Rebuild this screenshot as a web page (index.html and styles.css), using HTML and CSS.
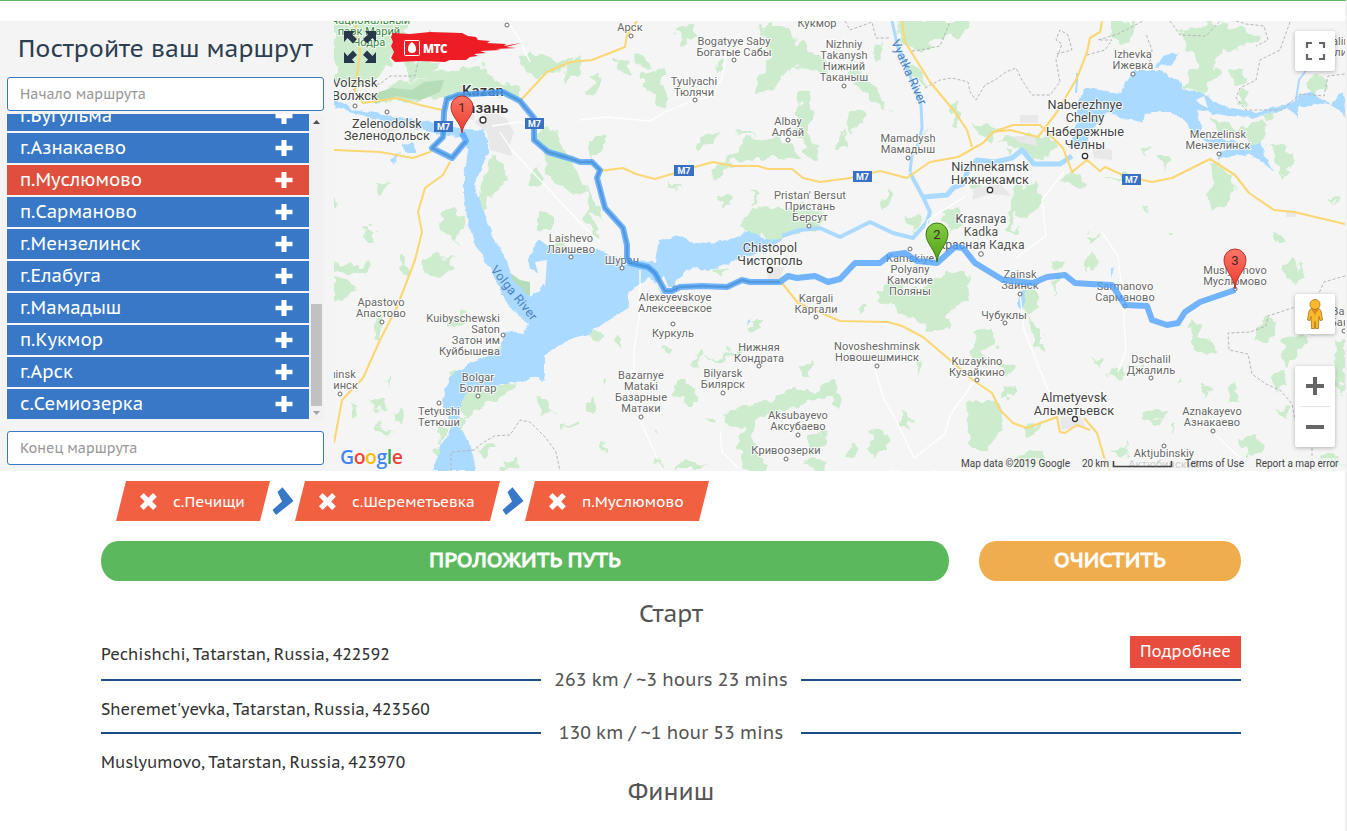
FILE: index.html
```html
<!DOCTYPE html>
<html lang="ru">
<head>
<meta charset="utf-8">
<title>Постройте ваш маршрут</title>
<link rel="stylesheet" href="styles.css">
</head>
<body>
<svg class="defs" width="0" height="0" aria-hidden="true">
  <symbol id="plus" viewBox="0 0 18 18"><path d="M6.500 1h5v5.700H17.500v4.600H11.500V17h-5v-5.700H.5V6.700h6z" fill="#fff"/></symbol>
  <symbol id="cross" viewBox="0 0 18 18"><path d="M4.500 1 9 5.400 13.500 1 17 4.500 12.600 9 17 13.500 13.500 17 9 12.600 4.500 17 1 13.500 5.400 9 1 4.500z" fill="#fff"/></symbol>
  <symbol id="chev" viewBox="0 0 22 30"><path d="M5.500 6 10.500 1.300 21.500 15 4 29 .5 24 10 15.500z" fill="#3878c7"/></symbol>
</svg>
<div class="page">
  <div class="planner">
    <aside class="panel">
      <h1 class="panel-title">Постройте ваш маршрут</h1>
      <input class="field" placeholder="Начало маршрута">
      <div class="list">
        <div class="items">
          <div class="item"><span>г.Бугульма</span><svg><use href="#plus"/></svg></div>
          <div class="item"><span>г.Азнакаево</span><svg><use href="#plus"/></svg></div>
          <div class="item active"><span>п.Муслюмово</span><svg><use href="#plus"/></svg></div>
          <div class="item"><span>п.Сарманово</span><svg><use href="#plus"/></svg></div>
          <div class="item"><span>г.Мензелинск</span><svg><use href="#plus"/></svg></div>
          <div class="item"><span>г.Елабуга</span><svg><use href="#plus"/></svg></div>
          <div class="item"><span>г.Мамадыш</span><svg><use href="#plus"/></svg></div>
          <div class="item"><span>п.Кукмор</span><svg><use href="#plus"/></svg></div>
          <div class="item"><span>г.Арск</span><svg><use href="#plus"/></svg></div>
          <div class="item"><span>с.Семиозерка</span><svg><use href="#plus"/></svg></div>
        </div>
        <svg class="scroll" viewBox="0 0 15 307"><path d="M0 0h15v307H0z" fill="#f1f1f1"/><path d="M2 190h11v102H2z" fill="#c1c1c1"/><path d="M4 10l3.500-4L11 10z" fill="#505050"/><path d="M4 297h7l-3.500 4z" fill="#a3a3a3"/></svg>
      </div>
      <input class="field" placeholder="Конец маршрута">
    </aside>
    <div class="map">
      <svg class="canvas" viewBox="334 21 1011 450">
        <defs>
          <filter id="rough" x="-5%" y="-5%" width="110%" height="110%" color-interpolation-filters="sRGB"><feTurbulence type="fractalNoise" baseFrequency=".09" numOctaves="2" seed="4"/><feDisplacementMap in="SourceGraphic" scale="16" xChannelSelector="R" yChannelSelector="G"/></filter>
          <filter id="shore" x="-5%" y="-5%" width="110%" height="110%" color-interpolation-filters="sRGB"><feTurbulence type="fractalNoise" baseFrequency=".12" numOctaves="2" seed="9"/><feDisplacementMap in="SourceGraphic" scale="6" xChannelSelector="R" yChannelSelector="G"/></filter>
          <linearGradient id="pinRed" x2="0" y2="1"><stop stop-color="#fd7567"/><stop offset="1" stop-color="#ea3a2c"/></linearGradient>
          <linearGradient id="pinGreen" x2="0" y2="1"><stop stop-color="#84cc44"/><stop offset="1" stop-color="#4fa014"/></linearGradient>
        </defs>
        <path d="M334 21h1011v450H334z" fill="#f5f5f5"/>
        <!-- forests -->
        <g class="forest" filter="url(#rough)">
          <path d="M334 21h74l-10 30-18 26-22 12-24-8zM372 98L398 82 424 80 440 72 480 66 500 80 520 88 514 100 480 92 440 98 400 102zM405 66l16-10 20 8-10 14-22 2zM516 56l28-2 14 8 12-4-8 14-34 4zM568 62l14-4-6 20-12 4zM540 125L555 132 570 160 588 190 572 195 552 178 545 160zM492 152l16 14-2 18-20 14-6 28-5-20zM440 212l16-4 10 8-8 26-16-12zM536 166l8 8-6 14-10-6zM374 184l14-4-8 12zM366 228l10 2-4 10-8-2zM540 212l14 4-4 14-10-2zM552 245l10-4 6 10-10 2zM588 186l12 20 4 14-16-8zM334 196l8 6-6 10zM334 264l22 2 16-4 2 8-16 4-24-2zM334 278l14 2 8 10-16 12-6-4zM400 255l8 12-2 6-6-6zM422 262l14-10 12 6 6-4-2 14-12 10-12-4zM450 318l18-8-4 14-14 4zM376 316l8 2-2 20-8-2zM366 398l16 2 6 10-14 2zM386 382l6-4-2 12zM394 412l8-2 2 14-8-4zM378 422l14 10-4 4-12-8zM350 405l8 2-4 10zM448 374L470 366 502 345 504 350 475 372 450 382zM463 396L478 390 520 382 505 396 486 402 463 418zM458 418l8 2-2 12-8-2zM440 426l12 4-14 12zM436 446l10-2-6 22zM536 394l10 6 8 14-14-2zM560 424l22-2-2 6-20-2zM500 462l14-4 4 10-14 2zM476 448l14-6 8 6-14 8z"/>
          <path d="M616 60l10 2 8 12-16-2zM634 56l18 2 2 8-18 2zM676 28l16-4 6 14-14 6zM650 72l14-4-4 14 8 18-6 8-12-16-10-8 4-10zM592 75l8 0-4 20-8-2zM716 66l8-4-6 14zM762 24H790L798 42 828 62 822 72 798 66 780 78 768 92 755 94 760 75 772 58 765 42zM798 92h12l2 26-6 16 12 12-12 2-10-18zM736 132l10-4 10 8zM730 156L745 140 780 136 796 150 798 162 778 158 752 158 724 163zM694 146l12-8 14-6-4 10-20 8zM590 140l16-4-4 14-12 8zM806 146l14 0-4 16-10-8zM712 165l14-6 8 8-20 14zM744 218L758 206 785 208 800 204 825 212 828 220 810 230 782 238 755 236 738 226zM588 208l10 20-4 12-8-18zM718 194l8-2 6 8-8 8zM754 190l6 4-6 10zM670 178l12 12-14-4zM712 270L728 269 722 276zM592 332l10 0 0 6-8 2zM614 340l6-2 0 10-6-2zM662 348l10 0-4 6zM692 358L702 352 700 364 696 370 690 364zM676 384l14 0 10 10-6 10-12-2-8-8zM702 360L724 356 748 340 742 352 722 360zM752 320l10 0-2 10-8 0zM798 366l18-6-6 16-8 0zM724 412L742 408 770 400 788 390 810 390 838 380 836 395 812 400 775 412 756 418 752 432 758 452 770 468 742 470 738 448 744 430 726 422zM808 438l12-8 10 10-10 14-12 2zM586 402l8-2-2 12-6 0zM598 445l8-4-2 10zM654 428l6-2 0 6zM672 468l14-8 22 8zM604 382l6-4-4 10zM702 418l14-2 0 8zM656 462l6-2 2 8zM802 463l12-4 14 4-6 8z"/>
          <path d="M898 21L970 21 958 36 934 40 918 52 900 40zM905 58L924 75 928 90 914 80zM878 44l6 6-4 10-10-2zM855 84L868 76 880 92 888 110 876 105zM846 116l14-8 6 10-12 14zM846 60l16 8-4 10-12-2zM950 110l8-10 2 24-6 2zM920 140l6-8 2 14zM970 126l12-2 18 6-10 12zM1000 140L1024 136 1055 140 1060 150 1038 158 1018 150zM1008 148l6 2-4 6zM838 135l10-4-2 18-10-2zM888 188l6 6-2 12-10 2zM1012 190L1040 184 1042 205 1028 218 1016 212 1014 228 1020 232 1008 232zM940 212l14-6 10 8-6 12-12 4zM970 182l14 2-8 8zM1060 180l14-12 10 16-8 4zM904 214l18 6-10 12zM950 272L966 270 970 300 952 310 946 325 928 332 918 320 880 305 876 294 890 284 918 290zM936 314l14-4-4 16-8 4zM975 330L990 328 998 345 985 350 982 365 970 360zM996 360L1016 365 1006 380zM1030 320l12 10 0 18-8-4zM1002 388l12-2 0 12-12 0zM966 402L990 400 1004 410 1000 430 990 448 970 446zM1026 424l14-2-4 14-8 0zM912 362l10 2-4 10zM836 384L842 400 838 410 832 395zM870 434L885 428 888 450 872 455zM846 445L860 443 855 458 846 456zM900 412l10 6 2 12-12-6zM1000 460l20-4 20-6 8 14-20 6zM1022 284l10-4 6 22-8 16-8-12zM1052 280l8-4-6 18zM1084 262l12-10 2 12-14 4zM1050 265l12-4-4 10zM860 306l6 2-4 4z"/>
          <path d="M1112 21h24l-2 16-14 10-8-10zM1182 30L1210 21 1240 28 1260 38 1230 50 1212 58 1218 75 1200 94 1182 85 1200 65 1185 48zM1228 72l14-4 4 14-12 4zM1240 88l10 4-4 14-8-4zM1306 84L1320 72 1328 88 1310 94zM1208 112L1220 122 1240 128 1260 120 1268 128 1252 150 1245 132 1220 136zM1258 112l16 0-6 10zM1266 144L1290 148 1292 165 1280 178 1278 160zM1140 152l10-8-4 12zM1158 156l14 0-8 14zM1106 178l24-2-4 6zM1212 162L1230 174 1234 188 1224 208 1212 212 1208 196 1214 180zM1142 206l8 0-2 8zM1087 232L1100 234 1090 245zM1170 230l4 4-4 0zM1274 234l10 0 4 10-10 0zM1330 198l8 2-4 6zM1278 264L1296 260 1304 278 1292 284zM1188 328L1194 320 1200 325 1196 338 1214 345 1214 354 1196 350zM1206 338l8 4-6 6zM1262 318L1275 320 1268 342 1254 340zM1280 340L1312 336 1300 350 1284 370zM1130 366l16-4-4 8zM1180 378l4 2-4 4zM1200 388l12 0-8 10zM1225 385l10-4 4 20-12 4zM1206 410l4 4-6 2zM1110 372l12-6 6 10-12 4zM1112 448l18-4-2 12-10 2zM1270 374l12-2 6 14-12 4zM1316 456l20-4 9 12-10 6zM1335 336h10v60l-8-20zM1145 412l10-4 14 6-8 10-14-2zM1240 440l16-6 8 10-14 14zM1090 360l12-4-2 12zM1170 426l4-4 2 12zM1275 410l14-2-2 12z"/>
        </g>
        <path class="grove" d="M366 96L392 88 412 90 424 82 444 80 440 92 420 100 396 96 376 104zM509 272L520 280 530 282 530 298 524 300 512 288z"/>
        <path class="urban" d="M474 122L488 110 506 118 514 132 508 150 494 148 486 132zM486 128L506 132 512 156 490 150zM380 126l16-4 8 6-18 6zM766 267l18 0-4 12-12 0zM974 188L1000 184 1012 196 990 194 972 200zM1014 136l20 0 4 10-20-4zM1060 417L1080 416 1086 426 1062 430zM1092 145L1112 150 1112 160 1094 158zM1020 115h18v8h-18zM462 110L474 112 474 120 462 118zM1286 211h10v6h-10z"/>
        <!-- water -->
        <g class="water" filter="url(#shore)">
          <path d="M334 98L350 108 390 116 430 121 462 129 484 130 488 140 488 155 481 168 474 185 480 202 487 222 495 242 505 256 513 280 530 298 541 290 545 276 530 268 528 256 540 240 556 252 580 249 600 250 613 257 630 261 655 262 659 240 680 236 690 242 705 244 735 238 748 231 765 239 782 240 770 250 745 256 725 264 708 272 697 267 687 270 674 285 662 292 650 278 640 284 627 293 630 307 605 322 590 334 572 338 545 354 545 375 543 382 538 376 522 381 495 386 468 390 461 404 458 427 468 440 474 460 476 471 433 471 440 447 452 427 448 416 443 405 444 390 453 373 474 362 502 348 502 337 510 330 523 335 528 324 510 308 500 290 490 268 474 242 467 218 464 195 464 175 468 152 464 137 440 134 400 126 370 118 334 106z"/>
          <path d="M1068 148L1078 118 1076 104 1086 88 1121 93 1124 84 1134 71 1160 70 1180 82 1182 88 1204 94 1220 106 1255 112 1290 104 1306 92 1318 96 1330 104 1344 92 1345 116 1330 104 1312 106 1298 106 1298 118 1288 108 1258 117 1228 116 1210 112 1196 110 1202 126 1200 138 1234 140 1244 148 1260 142 1266 158 1274 172 1262 162 1252 156 1240 154 1218 158 1220 152 1234 148 1212 146 1196 136 1184 120 1170 112 1150 112 1140 122 1122 118 1108 112 1090 130 1084 148zM1156 67L1164 55 1180 53 1172 64z"/>
          <path d="M1020 292L1026 290 1026 298 1022 310 1018 304zM1110 268l3 0-3 10zM748 320l4-2-5 8zM403 145L412 142 416 152 404 152zM390 160L400 152 394 166z"/>
        </g>
        <path class="land" d="M1196 100L1204 96 1208 108 1200 104zM654 284L664 276 670 291 662 292zM535 262L547 260 545 286 540 280z"/>
        <g class="river"><path d="M910 172L912 155 918 145 922 128 921 105 907 68 898 48 892 21" stroke-width="3"/><path d="M782 236L800 230 820 228 840 237 870 222 893 233 913 238 927 222 930 212 923 197 910 173" stroke-width="4"/><path d="M923 197L947 195 953 188 963 184 968 170 977 160 995 162 1012 158 1022 150 1034 164 1060 164 1072 156" stroke-width="5"/><path d="M1296 100L1299 80 1308 68 1330 60M1218 159L1236 148M1076 93L1077 80 1077 73" stroke-width="2"/></g>
        <!-- borders -->
        <path class="border" d="M345 96L358 86 380 84 390 76 415 76 418 62 430 48 430 30M845 21L850 30 872 22 876 38 890 38M912 51L920 50 940 46 950 22M925 88L940 80 952 78 968 82 970 92 976 100 985 85 995 80 1006 72 1016 68 1022 80 1032 95 1050 95 1060 82 1056 60 1062 44 1056 40 1060 30 1068 35 1072 50 1056 54M1087 55L1105 50 1112 40 1098 40 1118 34 1145 20M1150 62L1152 50 1146 34M1170 21L1180 35 1206 36 1220 21M1236 21L1246 24 1264 26 1268 40 1256 46M1290 22L1280 50 1260 60 1256 80 1240 88 1236 98 1246 110 1282 110 1300 94 1324 96 1328 76 1345 74M451 471L451 452 475 450 478 446 494 436 510 435 520 420 530 422 546 438 556 452 560 471M1345 276L1324 282 1316 300 1280 312 1268 316 1266 326 1250 332 1228 333 1229 350 1248 354 1252 374 1266 384 1280 390 1292 404 1295 420M1312 448L1312 471"/>
        <path class="minor" d="M580 120L606 117 650 121 665 112 695 100 712 96 722 78 728 40M500 132L512 150 540 180 582 225 600 242M492 126L520 122 536 128M508 22L520 40 530 62M640 270L640 310 634 350 634 372M640 420L658 460M720 430L722 452 738 468M1020 294L1024 330 1040 370 1054 404M875 370L884 400 896 420 914 458M914 458L945 434 950 415 974 382M1102 232L1118 256 1122 290 1126 350 1118 372M1016 258L1046 236 1042 200 1064 172M923 238L928 220 966 196M1217 436L1240 458"/>
        <!-- highways -->
        <g class="road">
          <path d="M334 150L380 152 413 158 430 152 436 145M355 21L360 52 355 92 363 103 397 98 420 105 442 110M450 162L443 175 425 188 418 212 422 232 419 244 415 260 397 307 380 340 363 378 342 400 334 443M520 101L547 72 570 62 592 60 625 47 627 35 637 21M600 171L623 168 636 174 655 179 695 167 713 162 733 166 758 166 768 169 792 169 803 178 820 182 850 178 880 171 907 178 930 162 958 157 983 143 993 132 1013 125 1040 125 1050 135 1063 148 1072 172 1087 160 1100 171 1105 167 1125 176 1152 182 1172 178 1210 159 1235 175 1249 193 1274 210 1294 212 1345 224M902 21L905 42 930 82 955 112 967 130 972 147M1102 21L1100 32 1090 38 1087 52 1077 78 1057 112 1038 137 1010 130 993 132M782 283L798 303 840 321 888 322 902 326 923 337 950 360 973 380 992 393 1000 410 1013 423 1027 428 1057 417 1060 432 1065 433 1077 425 1090 430M1084 418L1097 433 1104 457 1110 471" stroke="#fbd773" stroke-width="2.100"/>
        </g>
        <g class="label">
          <g class="park"><text x="371" y="24">национальный</text><text x="369" y="35">парк Марий</text><text x="369" y="46">Чодра</text></g>
          <g class="mid"><text x="355" y="87">Volzhsk</text><text x="355" y="100">Волжск</text><text x="387" y="128">Zelenodolsk</text><text x="387" y="140">Зеленодольск</text></g>
          <g class="bold"><text x="483" y="96">Kazan</text><text x="483" y="113">Казань</text></g>
          <text x="492" y="20">Атня</text><text x="630" y="31">Арск</text><text x="734" y="45">Bogatyye Saby</text><text x="734" y="56">Богатые Сабы</text><text x="694" y="85">Tyulyachi</text><text x="694" y="96">Тюлячи</text><text x="817" y="27">Кукмор</text><text x="844" y="48">Nizhniy</text><text x="844" y="59">Takanysh</text><text x="844" y="70">Нижний</text><text x="844" y="81">Таканыш</text><text x="788" y="125">Albay</text><text x="788" y="136">Албай</text><text x="908" y="142">Mamadysh</text><text x="908" y="153">Мамадыш</text><text x="810" y="199">Pristan' Bersut</text><text x="810" y="210">Пристань</text><text x="810" y="221">Берсут</text><text x="1133" y="58">Izhevka</text><text x="1133" y="69">Ижевка</text><text x="1218" y="138">Menzelinsk</text><text x="1218" y="149">Мензелинск</text>
          <g class="mid"><text x="1085" y="109">Naberezhnye</text><text x="1085" y="122">Chelny</text><text x="1085" y="136">Набережные</text><text x="1085" y="149">Челны</text><text x="990" y="171">Nizhnekamsk</text><text x="990" y="184">Нижнекамск</text><text x="770" y="252">Chistopol</text><text x="770" y="265">Чистополь</text><text x="1074" y="402">Almetyevsk</text><text x="1074" y="415">Альметьевск</text></g>
          <g class="sub"><text x="981" y="223">Krasnaya</text><text x="981" y="236">Kadka</text><text x="981" y="249">Красная Кадка</text></g>
          <text x="571" y="242">Laishevo</text><text x="571" y="253">Лаишево</text><text x="381" y="306">Apastovo</text><text x="381" y="317">Апастово</text><g class="end"><text x="500" y="322">Kuibyschewski</text><text x="500" y="333">Saton</text><text x="500" y="344">Затон им</text><text x="500" y="355">Куйбышева</text></g><text x="478" y="381">Bolgar</text><text x="478" y="392">Болгар</text><text x="439" y="415">Tetyushi</text><text x="439" y="426">Тетюши</text><g class="end"><text x="356" y="378">Buinsk</text><text x="358" y="389">Буинск</text></g>
          <text x="622" y="264">Шуран</text><text x="675" y="301">Alexeyevskoye</text><text x="675" y="312">Алексеевское</text><text x="673" y="337">Куркуль</text><text x="816" y="302">Kargali</text><text x="816" y="313">Каргали</text><text x="759" y="351">Нижняя</text><text x="759" y="362">Кондрата</text><text x="641" y="379">Bazarnye</text><text x="641" y="390">Mataki</text><text x="641" y="401">Базарные</text><text x="641" y="412">Матаки</text><text x="723" y="377">Bilyarsk</text><text x="723" y="388">Билярск</text><text x="798" y="419">Aksubayevo</text><text x="798" y="430">Аксубаево</text><text x="786" y="454">Кривоозерки</text><text x="910" y="262">Kamskiye</text><text x="910" y="273">Polyany</text><text x="910" y="284">Камские</text><text x="910" y="295">Поляны</text><text x="1020" y="278">Zainsk</text><text x="1020" y="289">Заинск</text><text x="1004" y="319">Чубуклы</text><text x="877" y="350">Novosheshminsk</text><text x="877" y="361">Новошешминск</text><text x="977" y="365">Kuzaykino</text><text x="977" y="376">Кузайкино</text><text x="1125" y="290">Sarmanovo</text><text x="1125" y="301">Сарманово</text><text x="1235" y="274">Muslyumovo</text><text x="1235" y="285">Муслюмово</text><text x="1151" y="363">Dschalil</text><text x="1151" y="374">Джалиль</text><text x="1212" y="415">Aznakayevo</text><text x="1212" y="426">Азнакаево</text><text x="1164" y="468">Актюбинский</text><text x="920" y="479">Cheremshan</text><text x="1346" y="45">Kalinniki</text><text x="1350" y="56">Калинники</text><text x="1348" y="315">Bakaly</text><text x="1350" y="326">Бакалы</text>
        </g>
        <path fill="#f5f5f5" opacity=".7" d="M956 458h389v13H956z"/>
        <g class="label"><text x="1164" y="457">Aktjubinskiy</text></g>
        <g class="dots"><circle cx="355" cy="106" r="2"/><circle cx="387" cy="112" r="2"/><circle cx="507" cy="25" r="2"/><circle cx="631" cy="36" r="2"/><circle cx="734" cy="60" r="2"/><circle cx="695" cy="100" r="2"/><circle cx="844" cy="86" r="2"/><circle cx="788" cy="140" r="2"/><circle cx="908" cy="158" r="2"/><circle cx="809" cy="226" r="2"/><circle cx="1133" cy="74" r="2"/><circle cx="1219" cy="154" r="2"/><circle cx="571" cy="257" r="2"/><circle cx="382" cy="322" r="2"/><circle cx="503" cy="335" r="2"/><circle cx="478" cy="396" r="2"/><circle cx="439" cy="403" r="2"/><circle cx="340" cy="394" r="2"/><circle cx="622" cy="268" r="2"/><circle cx="675" cy="288" r="2"/><circle cx="673" cy="324" r="2"/><circle cx="816" cy="317" r="2"/><circle cx="759" cy="366" r="2"/><circle cx="641" cy="417" r="2"/><circle cx="723" cy="393" r="2"/><circle cx="798" cy="435" r="2"/><circle cx="786" cy="459" r="2"/><circle cx="910" cy="249" r="2"/><circle cx="981" cy="254" r="2.300"/><circle cx="1020" cy="294" r="2"/><circle cx="1005" cy="323" r="2"/><circle cx="877" cy="366" r="2"/><circle cx="977" cy="380" r="2"/><circle cx="1125" cy="306" r="2"/><circle cx="1151" cy="378" r="2"/><circle cx="1213" cy="431" r="2"/><circle cx="1164" cy="446" r="2"/><circle cx="1344" cy="331" r="2"/><circle cx="1235" cy="289" r="2"/><g class="city"><circle cx="483" cy="120" r="3"/><circle cx="770" cy="270" r="2.500"/><circle cx="990" cy="190" r="2.700"/><circle cx="1085" cy="156" r="2.700"/><circle cx="1075" cy="419" r="2.500"/></g></g>
        <g class="rivername"><text transform="translate(490 270) rotate(51)" textLength="66">Volga River</text><text transform="translate(891 42) rotate(66)" textLength="70">Vyatka River</text></g>
        <!-- planned route -->
        <path class="route" d="M462 133L466 141 452 158 432 148 443 137 444 112 447 99 458 95 503 92 520 101 534 118 534 140 548 152 572 159 580 162 592 162 600 170 597 178 605 208 623 228 627 245 627 257 630 263 648 267 655 273 665 291 672 291 680 287 702 286 727 287 742 280 750 282 780 282 788 276 797 278 815 276 828 282 840 279 855 263 880 263 890 255 905 253 917 261 937 263 955 247 963 248 975 263 1003 280 1033 283 1047 277 1065 275 1075 283 1090 284 1112 285 1125 305 1147 306 1152 320 1167 325 1178 323 1185 312 1200 302 1235 290"/>
        <path class="route-core" d="M466 141L452 158 432 148 443 137 444 112 447 99 458 95 503 92 520 101 534 118 534 140 548 152 572 159 580 162 592 162 600 170 597 178 605 208 623 228 627 245 627 257 630 263 648 267 655 273 665 291 672 291 680 287 702 286 727 287 742 280 750 282 780 282"/>
        <g class="shield"><path d="M434 121h19v11h-19zM525 118h19v11h-19zM674 165h20v11h-20zM853 171h19v11h-19zM1122 174h19v11h-19z"/><text x="443.500" y="130">M7</text><text x="534.500" y="127">M7</text><text x="684" y="174">M7</text><text x="862.500" y="180">M7</text><text x="1131.500" y="183">M7</text></g>
        <g class="pin"><g transform="translate(462 96)"><path fill="url(#pinRed)" d="M0 37C-1 26-11 21-11 11A11 11 0 0 1 11 11C11 21 1 26 0 37z" stroke="#b5352b"/><text y="16">1</text></g><g transform="translate(937 223)"><path fill="url(#pinGreen)" d="M0 39C-1 27-11 21-11 11A11 11 0 0 1 11 11C11 21 1 27 0 39z" stroke="#417b13"/><text y="16">2</text></g><g transform="translate(1235 249)"><path fill="url(#pinRed)" d="M0 40C-1 27-11 21-11 11A11 11 0 0 1 11 11C11 21 1 27 0 40z" stroke="#b5352b"/><text y="16">3</text></g></g>
        <path fill="#26384a" d="M344 31H355L352 34.500 357 39 353 43.500 347.500 38 344 42zM376 31H365L368 34.500 363 39 367 43.500 372.500 38 376 42zM344 63H355L352 59.500 357 55 353 50.500 347.500 56 344 52zM376 63H365L368 59.500 363 55 367 50.500 372.500 56 376 52z"/>
        <path fill="#ee1c25" d="M393 33L410 34 430 32 462 33 468 36 476 37 478 40 490 41 487 43 506 44 504 46 521 43 506 47 516 48 496 49 501 50 480 51 486 53 474 54 478 56 470 57 466 60 450 60 445 62 420 61 395 62 391 58 394 52 391 46 393 42 391 37z"/>
        <rect x="404.500" y="40.500" width="15" height="15" rx="1" fill="none" stroke="#fff"/><path fill="#fff" d="M412 42c3 2 4 5 4 7a4 4 0 0 1-8 0c0-3 1-5 4-7z"/><text class="brand" x="423" y="52.500" textLength="24.500">МТС</text>
        <g class="google"><text x="340" y="464" textLength="63"><tspan fill="#4285f4">G</tspan><tspan fill="#ea4335">o</tspan><tspan fill="#fbbc05">o</tspan><tspan fill="#4285f4">g</tspan><tspan fill="#34a853">l</tspan><tspan fill="#ea4335">e</tspan></text></g>
        <g class="legal"><text x="961" y="467" textLength="109">Map data ©2019 Google</text><text x="1082" y="467" textLength="27">20 km</text><text x="1185" y="467" textLength="59">Terms of Use</text><text x="1255.500" y="467" textLength="83">Report a map error</text><path d="M1113.500 461v5.500h58V461" fill="none" stroke="#444" stroke-width="1.600"/></g>
      </svg>
      <div class="controls">
        <div class="ctl"><svg viewBox="0 0 40 40"><path d="M12 17v-5h5M24 12h5v5M29 23v5h-5M17 28h-5v-5" fill="none" stroke="#666" stroke-width="2.200"/></svg></div>
        <div class="ctl peg"><svg viewBox="0 0 40 40"><path d="M16 14.500h8l2 2.500 1.500 9-2.500.5-1-4-.5 12h-3l-.5-7-.5 7h-3l-.5-12-1 4-2.500-.5L14 17z" fill="#fbb829" stroke="#a5701d" stroke-width=".8"/><path d="M16 15h8l-4 6z" fill="#e08a27"/><circle cx="20" cy="10.500" r="5" fill="#fbb829" stroke="#a5701d" stroke-width=".8"/></svg></div>
        <div class="ctl zoom"><svg viewBox="0 0 40 81"><path d="M11 20h18M20 11v18M11 61h18" stroke="#666" stroke-width="4"/><path d="M5 40.500h30" stroke="#e6e6e6"/></svg></div>
      </div>
    </div>
  </div>

  <main class="content">
    <div class="stops">
      <div class="stop"><svg><use href="#cross"/></svg><span>с.Печищи</span></div>
      <svg class="chev"><use href="#chev"/></svg>
      <div class="stop two"><svg><use href="#cross"/></svg><span>с.Шереметьевка</span></div>
      <svg class="chev"><use href="#chev"/></svg>
      <div class="stop three"><svg><use href="#cross"/></svg><span>п.Муслюмово</span></div>
    </div>
    <div class="actions"><button class="btn build">ПРОЛОЖИТЬ ПУТЬ</button><button class="btn clear">ОЧИСТИТЬ</button></div>
    <h2 class="end-title">Старт</h2>
    <div class="address first"><span>Pechishchi, Tatarstan, Russia, 422592</span><button class="more">Подробнее</button></div>
    <div class="leg"><i></i><span>263 km / ~3 hours 23 mins</span><i></i></div>
    <div class="address second"><span>Sheremet'yevka, Tatarstan, Russia, 423560</span></div>
    <div class="leg"><i></i><span>130 km / ~1 hour 53 mins</span><i></i></div>
    <div class="address third"><span>Muslyumovo, Tatarstan, Russia, 423970</span></div>
    <h2 class="end-title finish">Финиш</h2>
  </main>
</div>
</body>
</html>
```
FILE: styles.css
```css
* { box-sizing: border-box; }
body { margin: 0; background: #fff; font-family: "PT Sans Caption", "PT Sans", "Noto Sans", sans-serif; overflow: hidden; }
.defs { position: absolute; }
.page { width: 1347px; height: 831px; border-top: 1px solid #5cb85c; border-right: 2px solid #f1f1f1; padding-top: 20px; }
.planner { display: flex; height: 450px; }
.panel { width: 334px; padding: 0 10px 0 7px; background: #f4f4f4; }
.panel-title { margin: 0 0 0 11px; height: 56px; line-height: 56px; font-size: 24px; font-weight: 400; color: #2c3e50; white-space: nowrap; }
.field { display: block; width: 317px; height: 34px; padding: 0 12px; border: 1px solid #3878c7; border-radius: 3px; background: #fff; font-family: inherit; font-size: 14px; }
.field::placeholder { color: #999; opacity: 1; }
.list { display: flex; height: 307px; margin: 3px 0 10px; overflow: hidden; width: 317px; }
.items { width: 302px; display: flex; flex-direction: column; gap: 2px; margin-top: -13px; }
.item { flex: 0 0 30px; display: flex; align-items: center; justify-content: space-between; padding: 0 16px 0 13px; background: #3878c7; color: #fff; font-size: 18px; line-height: 28px; }
.item svg { width: 18px; height: 18px; }
.active { background: #e04f3d; }
.scroll { width: 15px; height: 307px; }

.map { position: relative; width: 1011px; height: 450px; overflow: hidden; }
.canvas { display: block; width: 1011px; height: 450px; font-family: Roboto, sans-serif; }
.forest { fill: #cdeccd; }
.grove { fill: #b5ddb8; }
.urban { fill: #e8e8e8; }
.land { fill: #f5f5f5; }
.water { fill: #aadaff; }
.river { fill: none; stroke: #aadaff; stroke-linejoin: round; }
.border { fill: none; stroke: #b5b5b5; stroke-width: 1; stroke-dasharray: 3 2; }
.minor { fill: none; stroke: #fff; stroke-width: 1.3; }
.road { fill: none; stroke-linejoin: round; }
.label { font-size: 11px; fill: #666; text-anchor: middle; paint-order: stroke; stroke: #fff; stroke-width: 2px; stroke-opacity: .85; stroke-linejoin: round; letter-spacing: .1px; }
.label .end { text-anchor: end; }
.mid { font-size: 12.7px; fill: #444; }
.sub { font-size: 12.2px; fill: #555; }
.bold { font-size: 15px; fill: #333; font-weight: 500; }
.park { fill: #3a8544; }
.dots { fill: #fff; stroke: #666; stroke-width: 1; }
.city { stroke: #333; stroke-width: 1.3; }
.rivername { font-size: 12.5px; fill: #4a7fc0; }
.route { fill: none; stroke: #4ba0ff; stroke-opacity: .78; stroke-width: 6; stroke-linejoin: round; }
.route-core { fill: none; stroke: #3d88c8; stroke-opacity: .6; stroke-width: 2.5; stroke-linejoin: round; }
.shield { fill: #3871c3; }
.shield text { fill: #fff; font-size: 9px; font-weight: 700; text-anchor: middle; }
.pin text { fill: #42271f; font-size: 13px; text-anchor: middle; }
.brand { fill: #fff; font: 800 11.5px "Open Sans", sans-serif; }
.google { font-family: "Open Sans", sans-serif; font-size: 19.5px; font-weight: 600; paint-order: stroke; stroke: #fff; stroke-width: 1px; }
.legal { font-size: 10px; fill: #444; }
.controls { position: absolute; top: 10px; right: 10px; width: 40px; }
.ctl { height: 40px; background: #fff; border-radius: 2px; box-shadow: 0 1px 4px rgba(0, 0, 0, .28); }
.ctl svg { display: block; width: 100%; height: 100%; }
.peg { margin-top: 223px; }
.zoom { margin-top: 32px; height: 81px; }

.content { width: 1140px; margin-left: 101px; padding-top: 10px; }
.stops { display: flex; height: 40px; padding-left: 20px; }
.stop { display: flex; align-items: center; width: 144px; padding-left: 18px; background: #f16041; color: #fff; font-size: 15px; transform: skewX(-14deg); white-space: nowrap; }
.stop svg { width: 19px; height: 19px; margin-right: 15px; transform: skewX(14deg); }
.stop span { transform: skewX(14deg); }
.two { width: 195px; }
.three { width: 174px; }
.chev { width: 22px; height: 30px; margin: 5px 6px 0 7px; }
.actions { display: flex; gap: 30px; margin-top: 20px; }
.btn { height: 40px; border: 0; padding: 0 0 3px; border-radius: 17px / 20px; color: #fff; font-family: inherit; font-size: 21px; font-weight: 400; -webkit-text-stroke: .9px #fff; }
.build { width: 848px; background: #5cb85c; }
.clear { width: 262px; background: #f0ad4e; }
.end-title { margin: 13px 0 4px; height: 38px; line-height: 40px; font-size: 24px; font-weight: 400; text-align: center; color: #555; }
.finish { margin: 0; height: 32px; line-height: 34px; }
.address { display: flex; justify-content: space-between; color: #333; font-size: 16px; white-space: nowrap; }
.first { height: 36px; line-height: 36px; }
.second { height: 37px; padding-top: 5px; line-height: 32px; }
.third { height: 34px; padding-top: 8px; line-height: 26px; }
.more { width: 111px; height: 32px; padding: 0 0 2px; border: 0; background: #e74c3c; color: #fff; font-family: inherit; font-size: 16px; }
.leg { display: flex; align-items: center; justify-content: space-between; height: 16px; color: #555; font-size: 18px; line-height: 16px; white-space: nowrap; }
.leg i { width: 440px; height: 2px; background: #1b4f84; }
```
